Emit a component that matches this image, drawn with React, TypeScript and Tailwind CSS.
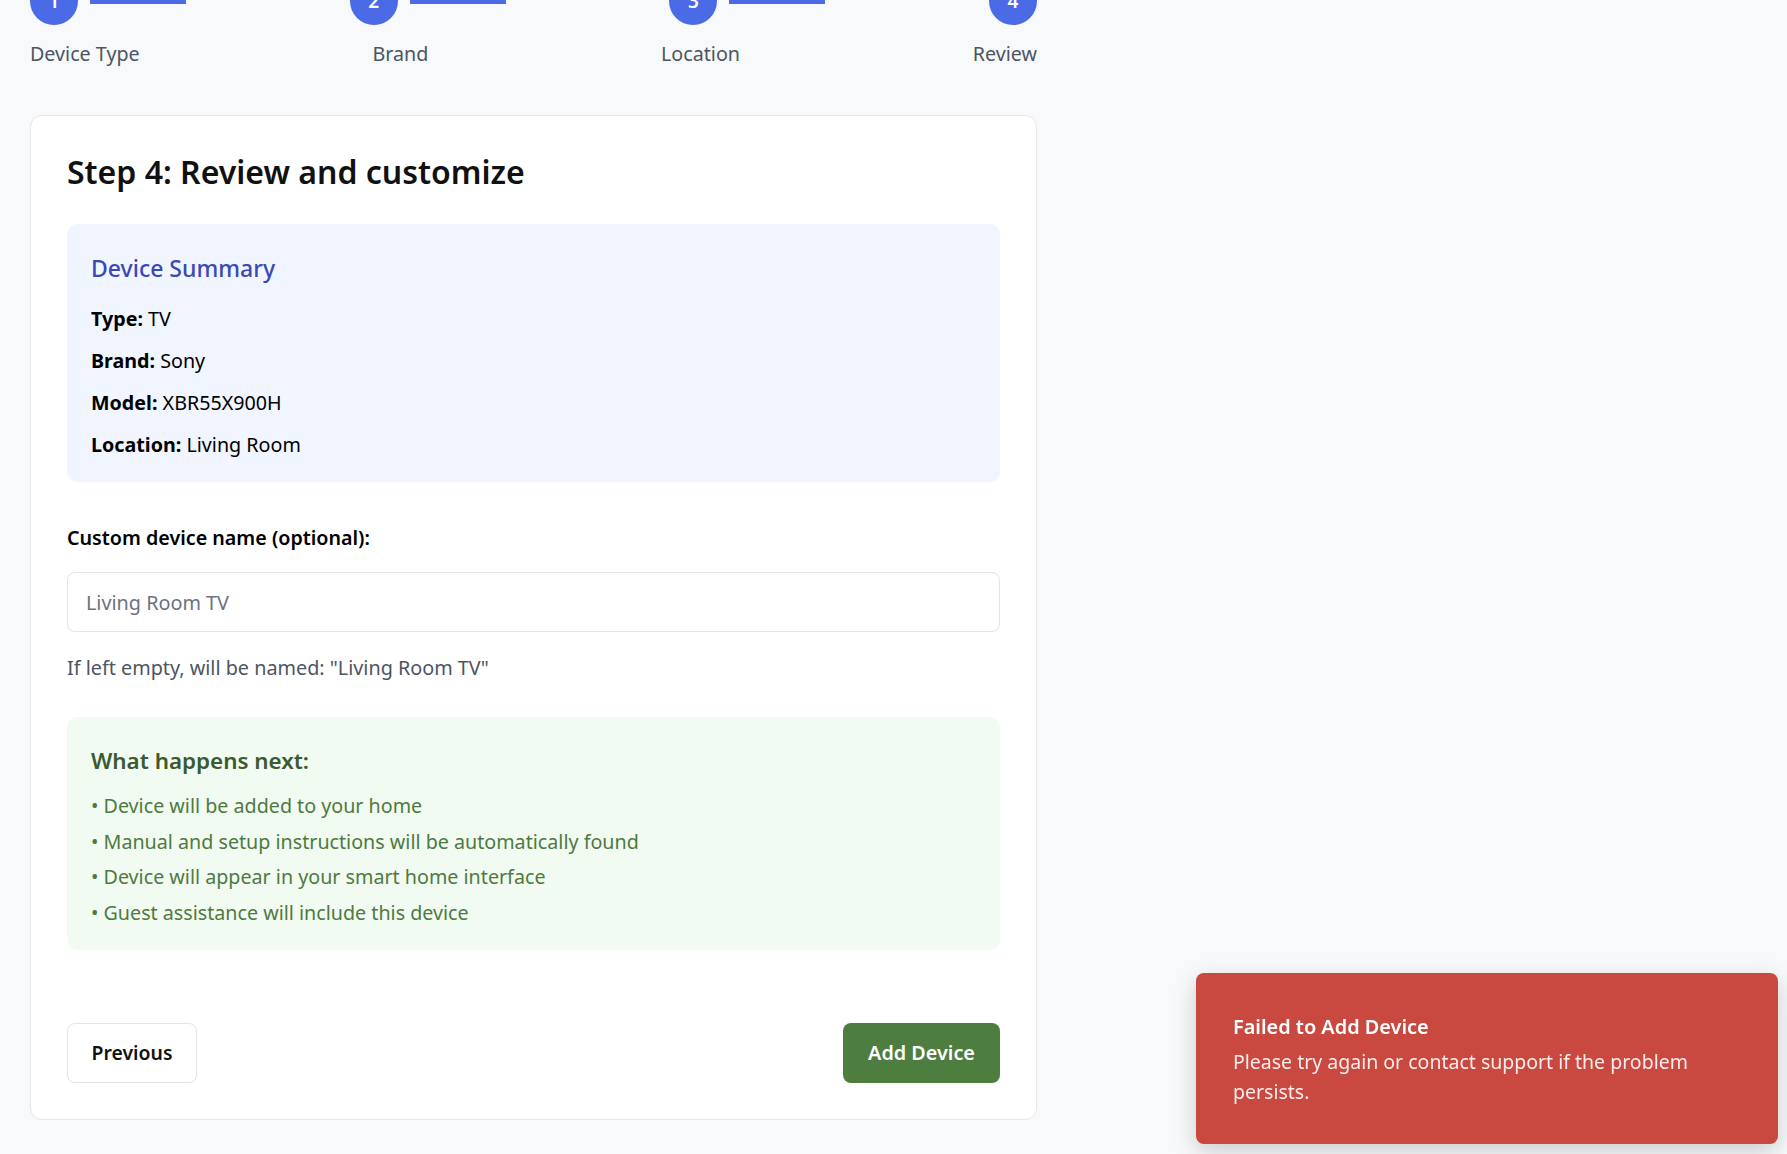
import React from "react";

const steps = ["Device Type", "Brand", "Location", "Review"];

const summary = [
  { label: "Type:", value: "TV" },
  { label: "Brand:", value: "Sony" },
  { label: "Model:", value: "XBR55X900H" },
  { label: "Location:", value: "Living Room" },
];

const nextSteps = [
  "Device will be added to your home",
  "Manual and setup instructions will be automatically found",
  "Device will appear in your smart home interface",
  "Guest assistance will include this device",
];

function Stepper() {
  return (
    <div>
      <div className="-mt-[23px] flex items-center justify-between">
        {steps.map((s, i) => (
          <div key={s} className="flex items-center">
            <div className="flex h-12 w-12 items-center justify-center rounded-full bg-[#4b6ae6] text-[19px] font-semibold text-white">
              {i + 1}
            </div>
            {i < steps.length - 1 && <div className="mx-3 h-[5px] w-24 bg-[#4b6ae6]" />}
          </div>
        ))}
      </div>
      <div className="mt-4 flex justify-between text-[19.7px] leading-[26px] text-[#4b5563]">
        {steps.map((s) => (
          <span key={s}>{s}</span>
        ))}
      </div>
    </div>
  );
}

export default function App() {
  return (
    <div className="min-h-screen overflow-hidden bg-[#f8f9fb] font-['Noto_Sans',sans-serif] text-black">
      <div className="ml-[30px] w-[1007px]">
        <Stepper />

        <div className="mt-[48px] rounded-xl border border-[#e5e7eb] bg-white px-9 pt-9 pb-9">
          <h2 className="text-[32px] font-semibold leading-[40px] text-[#111]">Step 4: Review and customize</h2>

          <div className="mt-8 rounded-[10px] bg-[#f0f5ff] px-6 pt-[29px] pb-[23px]">
            <h3 className="text-[23px] font-medium leading-[30px] text-[#3b48b5]">Device Summary</h3>
            <div className="mt-[22px] flex flex-col gap-[14px] text-[19.7px] leading-[28px]">
              {summary.map((r) => (
                <p key={r.label}>
                  <span className="font-bold">{r.label}</span> {r.value}
                </p>
              ))}
            </div>
          </div>

          <label className="mt-[42px] block text-[19.7px] font-semibold leading-[28px]">Custom device name (optional):</label>
          <input
            className="mt-5 block h-[60px] w-full rounded-lg border border-[#e2e4e8] px-[18px] text-[19.8px] outline-none placeholder:text-[#6b7280]"
            placeholder="Living Room TV"
          />
          <p className="mt-[22px] text-[19.8px] leading-[28px] text-[#4b5563]">
            If left empty, will be named: "Living Room TV"
          </p>

          <div className="mt-[35px] rounded-[10px] bg-[#f1fbf2] px-6 pt-[29px] pb-[19px]">
            <h4 className="text-[22.4px] font-semibold leading-[30px] text-[#3b5a2f]">What happens next:</h4>
            <ul className="mt-3 text-[19.7px] leading-[35.7px] text-[#4f7a3f]">
              {nextSteps.map((t) => (
                <li key={t}>• {t}</li>
              ))}
            </ul>
          </div>

          <div className="mt-[73px] flex items-center justify-between">
            <button className="h-[60px] w-[130px] rounded-lg border border-[#e2e4e8] bg-white text-[19.4px] font-semibold text-[#111]">
              Previous
            </button>
            <button className="h-[60px] w-[157px] rounded-lg bg-[#4e7d40] text-[19.8px] font-semibold text-white">
              Add Device
            </button>
          </div>
        </div>
      </div>

      <div className="fixed right-[9px] bottom-[10px] w-[582px] rounded-lg bg-[#c9483f] px-[37px] pt-[41px] pb-[37px] text-white shadow-[0_8px_24px_rgba(0,0,0,0.18)]">
        <p className="text-[19.9px] font-semibold leading-[26px]">Failed to Add Device</p>
        <p className="mt-[7px] text-[19.5px] leading-[30px] text-white/90">
          Please try again or contact support if the problem persists.
        </p>
      </div>
    </div>
  );
}
